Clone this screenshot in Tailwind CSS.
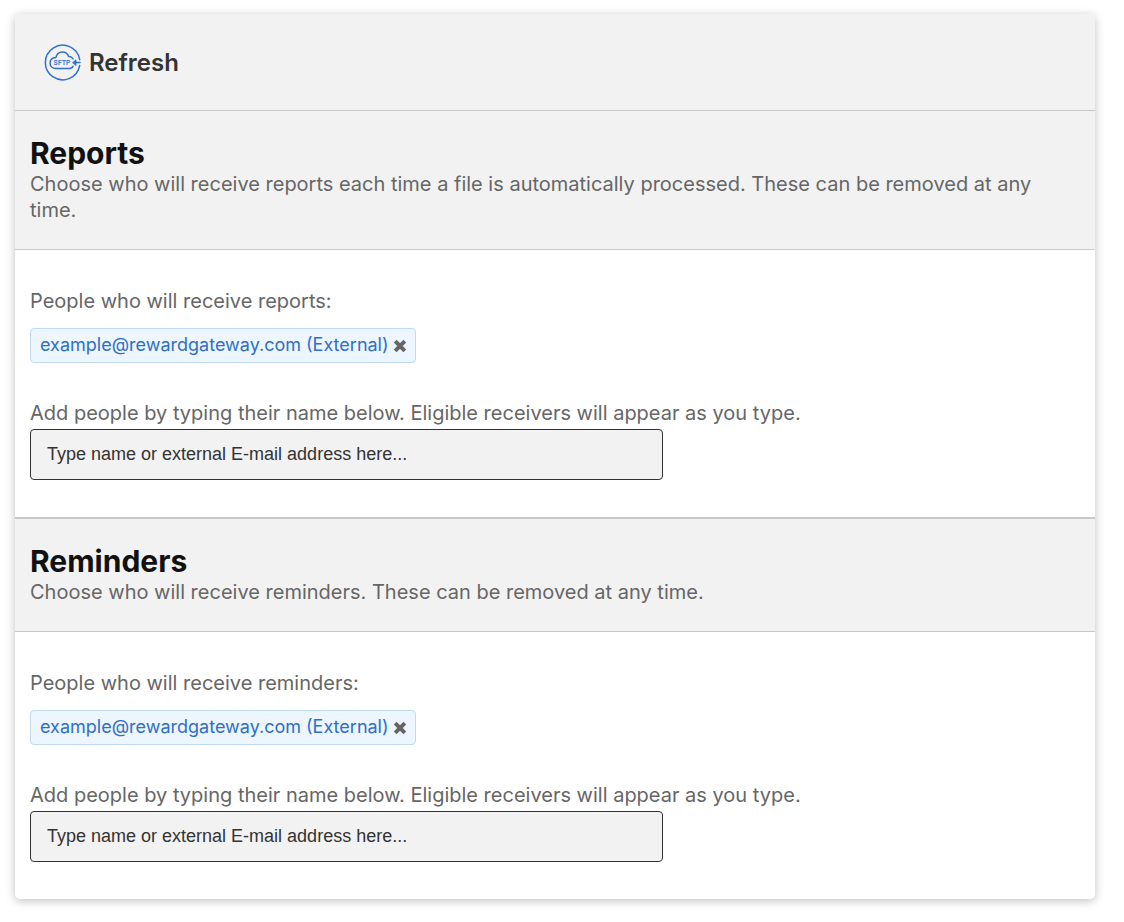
<!DOCTYPE html>
<html lang="en">
<head>
<meta charset="utf-8">
<meta name="viewport" content="width=device-width, initial-scale=1">
<title>Refresh</title>
<script src="https://cdn.jsdelivr.net/npm/@tailwindcss/browser@4"></script>
</head>
<body class="bg-white font-['Inter',sans-serif] text-xl leading-[26px] text-[#666666]">
<main class="mt-[14px] mr-[29px] mb-[23px] ml-[15px] overflow-hidden rounded-[5px] bg-white shadow-[0_2px_10px_rgba(0,0,0,0.25)]">
  <header class="flex h-[97px] items-center gap-2 border-b border-[#c8c8c8] bg-[#f2f2f2] px-[29px]">
    <svg class="size-[37px] shrink-0" viewBox="0 0 37 37" fill="none" stroke="#2f6fce" stroke-width="1.5" stroke-linecap="round" stroke-linejoin="round" aria-hidden="true">
      <path d="M35.7 15.6A17.3 17.3 0 1 0 35.7 21.4"/>
      <path d="M29 14.8C28 13 26.2 12.4 24.7 12.5C23.5 9.4 21.2 7.9 18.6 7.9C15.2 7.9 12.6 10.1 11.9 13.4C8.2 13.6 6.1 16 6.1 19C6.1 22.3 8.5 24.6 12 24.6H25.4C27.2 24.6 28.4 23.8 29 22.3"/>
      <path d="M31 18.5H36"/>
      <path d="M28.8 18.5L32 15.8V21.2Z" fill="#2f6fce" stroke-width="0.8"/>
      <text x="9.6" y="20.8" font-family="Inter, sans-serif" font-size="6.6" font-weight="600" fill="#2f6fce" stroke="none">SFTP</text>
    </svg>
    <h1 class="pt-[2px] text-2xl font-semibold text-[#333333]">Refresh</h1>
  </header>

  <section>
    <div class="border-b border-[#c8c8c8] bg-[#f2f2f2] px-[15px] pt-6 pb-[26px]">
      <h2 class="text-3xl leading-9 font-bold text-[#111111]">Reports</h2>
      <p>Choose who will receive reports each time a file is automatically processed. These can be removed at any time.</p>
    </div>
    <div class="px-[15px] pt-[38px] pb-[37px]">
      <p>People who will receive reports:</p>
      <div class="mt-[14px] flex">
        <span class="flex h-[35px] items-center gap-1 rounded-[4px] border border-[#bfdaf3] bg-[#edf5ff] pr-2 pb-[2px] pl-[9px] text-lg text-[#2f6fc4]">
          example@rewardgateway.com (External)
          <button type="button" aria-label="Remove report receiver" class="flex items-center justify-center">
            <svg class="h-4 w-[14px]" viewBox="0 0 14 16" fill="none" stroke="#666666" stroke-width="4" aria-hidden="true"><path d="M2.2 4.2L11.8 13.8M11.8 4.2L2.2 13.8"/></svg>
          </button>
        </span>
      </div>
      <label for="reports" class="mt-[37px] block">Add people by typing their name below. Eligible receivers will appear as you type.</label>
      <input id="reports" type="text" placeholder="Type name or external E-mail address here..." class="mt-[3px] block h-[51px] w-full max-w-[633px] rounded-[4px] border border-[#333333] bg-[#f2f2f2] px-4 font-['Liberation_Sans',Arial,sans-serif] text-lg text-[#333333] placeholder:text-[#333333]">
    </div>
  </section>

  <section>
    <div class="border-t-2 border-b border-[#c8c8c8] bg-[#f2f2f2] px-[15px] pt-6 pb-[26px]">
      <h2 class="text-3xl leading-9 font-bold text-[#111111]">Reminders</h2>
      <p>Choose who will receive reminders. These can be removed at any time.</p>
    </div>
    <div class="px-[15px] pt-[38px] pb-[37px]">
      <p>People who will receive reminders:</p>
      <div class="mt-[14px] flex">
        <span class="flex h-[35px] items-center gap-1 rounded-[4px] border border-[#bfdaf3] bg-[#edf5ff] pr-2 pb-[2px] pl-[9px] text-lg text-[#2f6fc4]">
          example@rewardgateway.com (External)
          <button type="button" aria-label="Remove reminder receiver" class="flex items-center justify-center">
            <svg class="h-4 w-[14px]" viewBox="0 0 14 16" fill="none" stroke="#666666" stroke-width="4" aria-hidden="true"><path d="M2.2 4.2L11.8 13.8M11.8 4.2L2.2 13.8"/></svg>
          </button>
        </span>
      </div>
      <label for="reminders" class="mt-[37px] block">Add people by typing their name below. Eligible receivers will appear as you type.</label>
      <input id="reminders" type="text" placeholder="Type name or external E-mail address here..." class="mt-[3px] block h-[51px] w-full max-w-[633px] rounded-[4px] border border-[#333333] bg-[#f2f2f2] px-4 font-['Liberation_Sans',Arial,sans-serif] text-lg text-[#333333] placeholder:text-[#333333]">
    </div>
  </section>
</main>
</body>
</html>
